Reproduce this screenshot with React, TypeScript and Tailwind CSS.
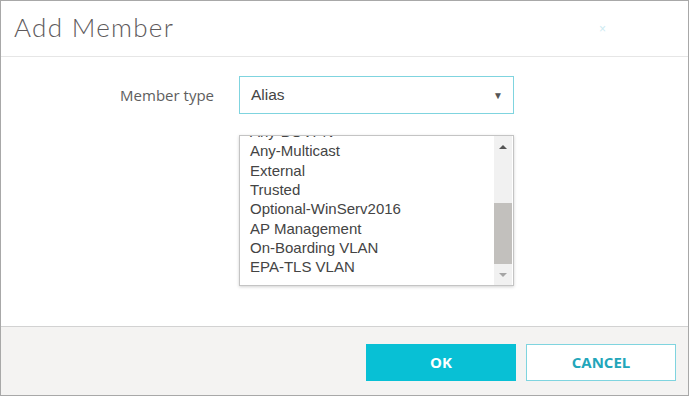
import React from "react";

const items = [
  "Any-BOVPN",
  "Any-Multicast",
  "External",
  "Trusted",
  "Optional-WinServ2016",
  "AP Management",
  "On-Boarding VLAN",
  "EPA-TLS VLAN",
];

export default function App() {
  return (
    <div className="w-[689px] h-[396px] border border-[#a8a8a8] bg-white flex flex-col overflow-hidden">
      <div className="h-[56px] shrink-0 border-b border-[#e6e6e6] flex items-center justify-between pl-[13px] pr-[82px]">
        <div
          className="text-[26px] font-light text-[#5e5a5c] leading-none tracking-[1.3px] -mt-[3px]"
          style={{ fontFamily: "Lato, 'Open Sans', sans-serif" }}
        >
          Add Member
        </div>
        <div
          className="text-[12px] text-[#cdeaf2] leading-none"
          style={{ fontFamily: "'Liberation Sans', Arial, sans-serif" }}
        >
          ×
        </div>
      </div>

      <div className="flex-1 flex flex-col">
        <div className="flex items-center mt-[19px]">
          <div
            className="w-[238px] pr-[25px] text-right text-[15px] text-[#5e5e5e]"
            style={{ fontFamily: "'Open Sans', sans-serif" }}
          >
            Member type
          </div>
          <div className="w-[275px] h-[38px] border border-[#7fd4df] flex items-center justify-between pl-[11px] pr-[10px]">
            <span
              className="text-[15.5px] text-[#444]"
              style={{ fontFamily: "'Liberation Sans', Arial, sans-serif" }}
            >
              Alias
            </span>
            <span className="text-[10px] text-[#555] leading-none">▼</span>
          </div>
        </div>

        <div className="ml-[238px] mt-[21px] w-[275px] h-[151px] border border-[#c4c4c4] shadow-[0_1px_3px_rgba(0,0,0,0.18)] flex overflow-hidden">
          <div className="flex-1 overflow-hidden">
            <div className="-mt-[14px] pl-[10px]">
              {items.map((t) => (
                <div
                  key={t}
                  className="h-[19.33px] leading-[19.33px] text-[15px] text-[#444] whitespace-nowrap"
                  style={{ fontFamily: "'Liberation Sans', Arial, sans-serif" }}
                >
                  {t}
                </div>
              ))}
            </div>
          </div>
          <div className="w-[18px] mr-[1px] bg-[#f1f1f1] flex flex-col items-center">
            <div className="h-[22px] w-full flex items-center justify-center">
              <div className="w-0 h-0 border-l-[4px] border-r-[4px] border-b-[4px] border-l-transparent border-r-transparent border-b-[#555]" />
            </div>
            <div className="h-[45px]" />
            <div className="h-[61px] w-full bg-[#c2c0bd]" />
            <div className="flex-1 w-full flex items-center justify-center">
              <div className="w-0 h-0 border-l-[4px] border-r-[4px] border-t-[4px] border-l-transparent border-r-transparent border-t-[#a5a5a5]" />
            </div>
          </div>
        </div>
      </div>

      <div className="h-[69px] shrink-0 border-t border-[#d2d2d2] bg-[#f4f3f2] flex items-start justify-end gap-[10px] pr-[12px] pt-[17px]">
        <div
          className="w-[150px] h-[37px] bg-[#08c0d5] text-white font-bold text-[15px] flex items-center justify-center"
          style={{ fontFamily: "'Open Sans', sans-serif" }}
        >
          OK
        </div>
        <div
          className="w-[150px] h-[37px] bg-white border border-[#7fd4df] text-[#22a6ba] font-bold text-[15px] flex items-center justify-center"
          style={{ fontFamily: "'Open Sans', sans-serif" }}
        >
          CANCEL
        </div>
      </div>
    </div>
  );
}
